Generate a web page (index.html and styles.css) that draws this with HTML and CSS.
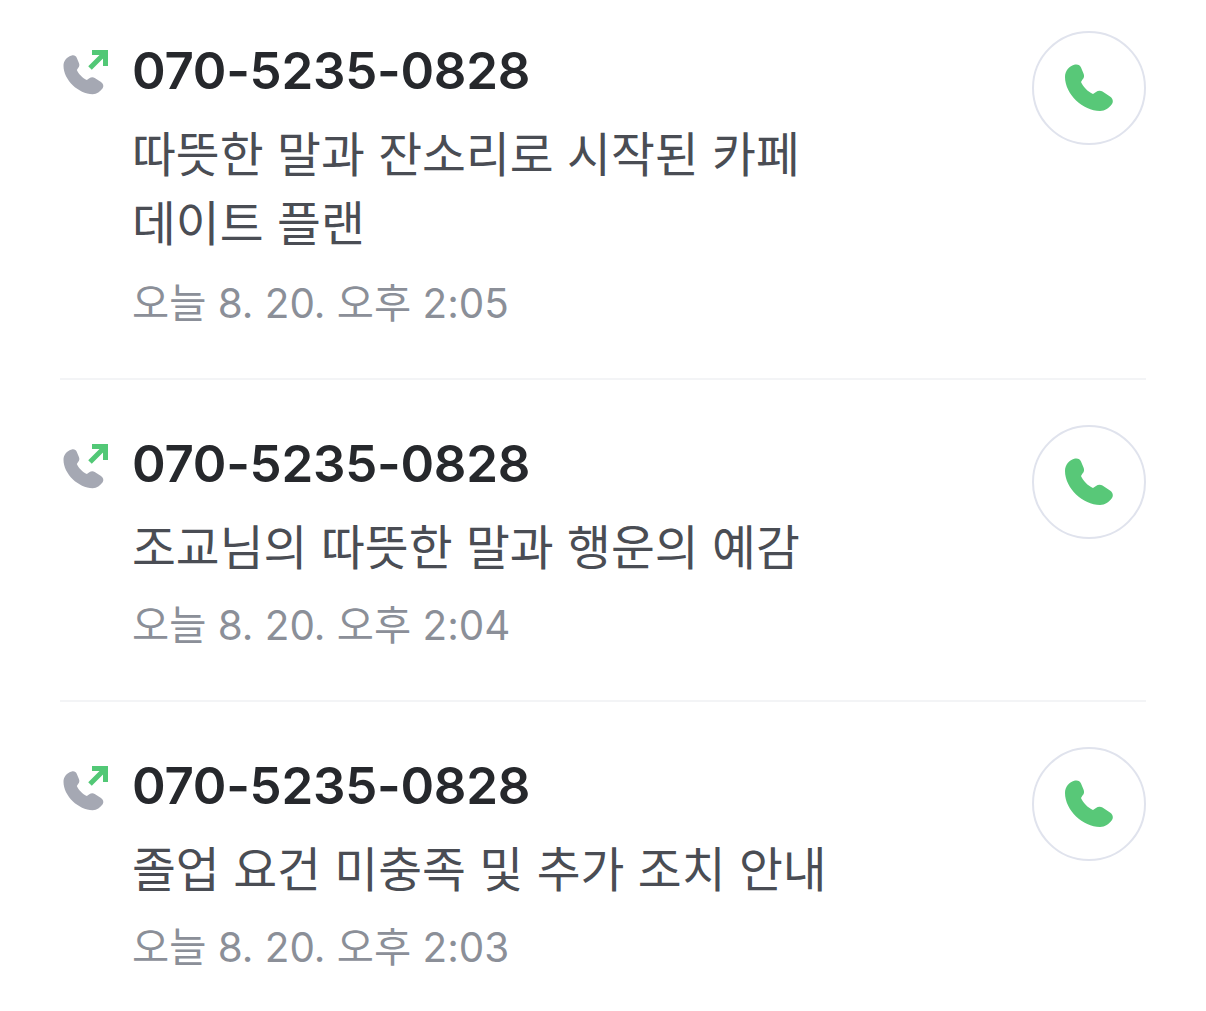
FILE: index.html
```html
<!DOCTYPE html>
<html lang="ko">
<head>
    <meta charset="UTF-8">
    <meta name="viewport" content="width=device-width, initial-scale=1.0">
    <title>통화 기록</title>
    <link rel="stylesheet" href="styles.css">
</head>
<body>

<svg class="icon-defs" width="0" height="0">
    <symbol id="handset" viewBox="0 0 48 48">
        <path d="M0 13 C0 7 4 2 10 0.5 C13 0 15 1 16 3.5 L18.5 9.5 C19.5 12 19 14 17.5 15.5 L16 18 C17.5 22 23 28 28 30 L31 28 C33 26.5 35.5 26.5 37.5 27.5 L45 32.5 C48 34.5 48.5 37.5 47 40 C44 44 40 47 35 47 C18 47 0 30 0 13 Z"/>
    </symbol>
</svg>

<div class="call-list">
    <div class="call">
        <div class="call-type">
            <svg class="handset-gray"><use href="#handset"/></svg>
            <svg class="arrow" viewBox="0 0 20 20"><path d="M2 18 L17 3 M4 2.5 H17.5 V16"/></svg>
        </div>
        <div class="call-info">
            <div class="call-number">070-5235-0828</div>
            <div class="call-summary">따뜻한 말과 잔소리로 시작된 카페<br>데이트 플랜</div>
            <div class="call-date">오늘 8. 20. 오후 2:05</div>
        </div>
        <div class="call-btn"><svg class="handset-green"><use href="#handset"/></svg></div>
    </div>

    <div class="call call-short">
        <div class="call-type">
            <svg class="handset-gray"><use href="#handset"/></svg>
            <svg class="arrow" viewBox="0 0 20 20"><path d="M2 18 L17 3 M4 2.5 H17.5 V16"/></svg>
        </div>
        <div class="call-info">
            <div class="call-number">070-5235-0828</div>
            <div class="call-summary">조교님의 따뜻한 말과 행운의 예감</div>
            <div class="call-date">오늘 8. 20. 오후 2:04</div>
        </div>
        <div class="call-btn"><svg class="handset-green"><use href="#handset"/></svg></div>
    </div>

    <div class="call call-short">
        <div class="call-type">
            <svg class="handset-gray"><use href="#handset"/></svg>
            <svg class="arrow" viewBox="0 0 20 20"><path d="M2 18 L17 3 M4 2.5 H17.5 V16"/></svg>
        </div>
        <div class="call-info">
            <div class="call-number">070-5235-0828</div>
            <div class="call-summary">졸업 요건 미충족 및 추가 조치 안내</div>
            <div class="call-date">오늘 8. 20. 오후 2:03</div>
        </div>
        <div class="call-btn"><svg class="handset-green"><use href="#handset"/></svg></div>
    </div>
</div>

</body>
</html>
```

FILE: styles.css
```css
body {
    margin: 0;
    background-color: #fff;
    font-family: Inter, "Noto Sans CJK KR", sans-serif;
    overflow: hidden;
}

.icon-defs {
    display: block;
}

.call-list {
    padding: 31px 60px 0;
}

.call {
    display: flex;
    align-items: flex-start;
    padding-bottom: 44px;
    margin-bottom: 45px;
    border-bottom: 2px solid #f3f4f6;
}

.call:last-child {
    border-bottom: none;
    padding-bottom: 0;
    margin-bottom: 0;
}

.call-type {
    position: relative;
    width: 73px;
    height: 70px;
    flex-shrink: 0;
}

.handset-gray {
    position: absolute;
    left: 3px;
    top: 24px;
    width: 41px;
    height: 40px;
    fill: #a5a8b3;
}

.arrow {
    position: absolute;
    left: 28px;
    top: 19px;
    width: 20px;
    height: 20px;
    fill: none;
    stroke: #52c876;
    stroke-width: 5;
}

.call-info {
    flex-grow: 1;
    padding-top: 1px;
}

.call-number {
    font-size: 51px;
    font-weight: 600;
    letter-spacing: -0.25px;
    line-height: 78px;
    margin-left: -1px;
    color: #26282c;
}

.call-summary {
    font-size: 47.7px;
    line-height: 69px;
    margin-left: -1px;
    color: #4a4d54;
    margin-top: 11px;
}

.call-date {
    font-size: 40.4px;
    line-height: 60px;
    margin-left: -1px;
    color: #8b8f98;
    margin-top: 15px;
}

/* one line summary sits a bit tighter */
.call-short .call-info {
    padding-top: 0;
}

.call-short .call-date {
    margin-top: 13px;
}

.call-btn {
    width: 110px;
    height: 110px;
    border: 2px solid #e0e3ed;
    border-radius: 50%;
    display: flex;
    align-items: center;
    justify-content: center;
    flex-shrink: 0;
}

.handset-green {
    width: 48px;
    height: 48px;
    fill: #58c878;
}
```
